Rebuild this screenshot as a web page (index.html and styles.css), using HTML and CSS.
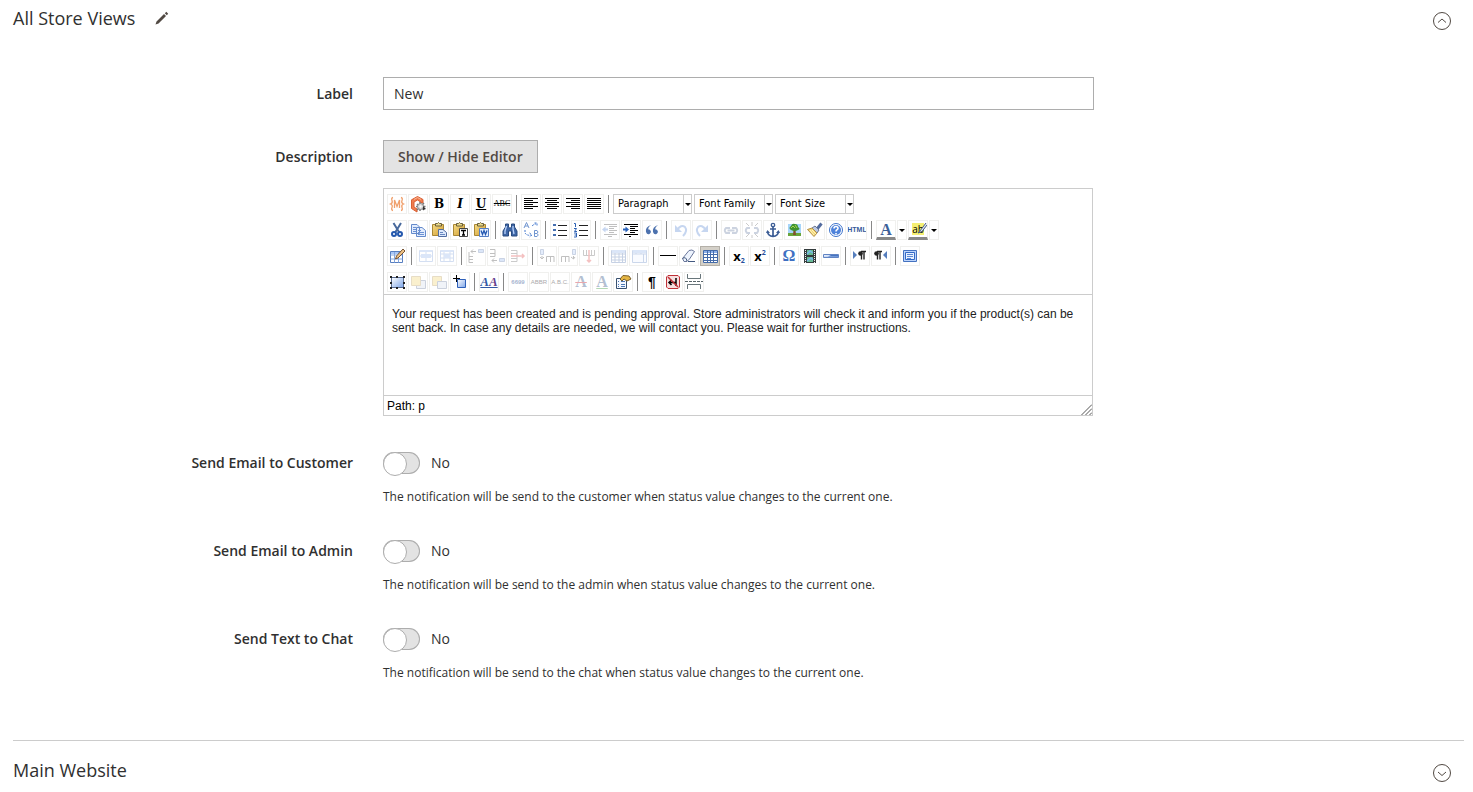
FILE: index.html
```
<!DOCTYPE html>
<html lang="en">
<head>
    <meta charset="UTF-8">
    <meta name="viewport" content="width=device-width, initial-scale=1.0">
    <title>All Store Views</title>
    <link rel="stylesheet" href="styles.css">
</head>
<body>

<!-- Toolbar icons -->
<svg class="sprite" aria-hidden="true">
    <defs>
        <linearGradient id="blue" x1="0" y1="0" x2="1" y2="1">
            <stop offset="0" stop-color="#fff"/>
            <stop offset="1" stop-color="#7ea6e8"/>
        </linearGradient>
        <linearGradient id="gold" x1="0" y1="0" x2="1" y2="1">
            <stop offset="0" stop-color="#f6dc85"/>
            <stop offset="1" stop-color="#cf9c33"/>
        </linearGradient>
    </defs>
    <symbol id="variable" viewBox="0 0 18 18">
        <path d="M5 2.500Q3 3 4 5.500Q5 8 2.500 9Q5 10 4 12.500Q3 15 5 15.500M13 2.500Q15 3 14 5.500Q13 8 15.500 9Q13 10 14 12.500Q15 15 13 15.500M6.500 13V5L9 11.500L11.500 5V13" fill="none" stroke="#f0a06c" stroke-width="1.300"/>
    </symbol>
    <symbol id="widget" viewBox="0 0 18 18">
        <path d="M8.500 1.500L14 4.500V8L11 7V6.500L8.500 5L5 7V12L8 14V17L2.500 13.500V4.800Z" fill="#ef7d4f" stroke="#d95f32"/>
        <path d="M5 4.500L8.500 2.500L12 4.500" fill="none" stroke="#f9b799"/>
        <path d="M11 7V9M11 14V16M7 11.500H9M14 11.500H16.500M8 9L15 15M15 8L8 15" stroke="#777" stroke-width="1.500"/>
        <circle cx="11.500" cy="11.500" r="3" fill="#ddd" stroke="#888"/>
        <circle cx="11.500" cy="11.500" r="1" fill="#fff"/>
        <path d="M14 11L17 14L14 15Z" fill="#333"/>
    </symbol>
    <symbol id="left" viewBox="0 0 18 18"><path d="M2 3.500H16M2 5.500H11M2 7.500H16M2 9.500H11M2 11.500H16M2 13.500H11" stroke="#000"/></symbol>
    <symbol id="center" viewBox="0 0 18 18"><path d="M2 3.500H16M4 5.500H14M2 7.500H16M4 9.500H14M2 11.500H16M4 13.500H14" stroke="#000"/></symbol>
    <symbol id="right" viewBox="0 0 18 18"><path d="M2 3.500H16M7 5.500H16M2 7.500H16M7 9.500H16M2 11.500H16M7 13.500H16" stroke="#000"/></symbol>
    <symbol id="full" viewBox="0 0 18 18"><path d="M2 3.500H16M2 5.500H16M2 7.500H16M2 9.500H16M2 11.500H16M2 13.500H16" stroke="#000"/></symbol>

    <symbol id="cut" viewBox="0 0 18 18">
        <path d="M5.500 2L11 11M13 2L7.500 11" stroke="#48699c" stroke-width="2"/>
        <circle cx="6" cy="13" r="2" fill="none" stroke="#2458ad" stroke-width="2"/>
        <circle cx="12" cy="13" r="2" fill="none" stroke="#2458ad" stroke-width="2"/>
    </symbol>
    <symbol id="copy" viewBox="0 0 18 18">
        <path d="M2.500 3.500H8L10.500 6V12.500H2.500ZM7.500 6.500H13L16.500 9.500V15.500H7.500Z" fill="#e3edfd" stroke="#648acb"/>
        <path d="M4 6.500H7M4 8.500H7M4 10.500H7M9 9.500H12M9 11.500H15M9 13.500H15" stroke="#6b91d3"/>
    </symbol>
    <symbol id="board" viewBox="0 0 18 18">
        <path d="M2.500 3.500H13.500V14.500H2.500Z" fill="url(#gold)" stroke="#a88735"/>
        <path d="M5.500 5V2.500H7.500L8.500 1.500L9.500 2.500H11.500V5Z" fill="#e9d98d" stroke="#695e39"/>
    </symbol>
    <symbol id="paste" viewBox="0 0 18 18">
        <use href="#board"/>
        <path d="M8.500 8.500H13L16.500 11.500V15.500H8.500Z" fill="#dce8fb" stroke="#526da0"/>
        <path d="M10 11.500H13M10 13.500H15" stroke="#6787bf"/>
    </symbol>
    <symbol id="pastetext" viewBox="0 0 18 18">
        <use href="#board"/>
        <path d="M8.500 7.500H16.500V15.500H8.500Z" fill="#fff" stroke="#444"/>
        <path d="M10 9.500H15M12.500 9V14M11 14H14" stroke="#000" stroke-width="1.300"/>
    </symbol>
    <symbol id="pasteword" viewBox="0 0 18 18">
        <use href="#board"/>
        <path d="M7.500 7.500H16.500V15.500H7.500Z" fill="#e5effe" stroke="#557ec3"/>
        <path d="M9 9.500L10.500 13.500L12 9.500L13.500 13.500L15 9.500" fill="none" stroke="#2257b0" stroke-width="1.300"/>
    </symbol>
    <symbol id="search" viewBox="0 0 18 18">
        <path d="M4.500 3H7.500V6L8.500 7H9.500L10.500 6V3H13.500V6L16 10V15H10.500V10H7.500V15H2V10L4.500 6Z" fill="#3e66a6" stroke="#294a7e"/>
        <path d="M5.500 5L4 10V13M12 5V8L13 13" fill="none" stroke="#b9d2fa" stroke-width="1.300"/>
    </symbol>
    <symbol id="replace" viewBox="0 0 18 18">
        <path d="M2 7L4.500 1.500L7 7M3 5H6M12.500 9.500V15.500H15Q17.500 14 15 12.500Q17 11 15 9.500ZM12.500 12.500H15" fill="none" stroke="#7195cf"/>
        <path d="M10 5Q12 3 14 3M12.500 2H15V4.500M3 9V12Q5 15 9 14M7.500 12L10 14L7.500 16" fill="none" stroke="#477bcf" stroke-dasharray="2 1"/>
    </symbol>
    <symbol id="bullist" viewBox="0 0 18 18">
        <path d="M7 4.500H16M7 9.500H16M7 14.500H16" stroke="#222"/>
        <path d="M2 3H5V5H2ZM2 8H5V10H2ZM2 13H5V15H2Z" fill="#456fb0"/>
    </symbol>
    <symbol id="numlist" viewBox="0 0 18 18">
        <path d="M7 4.500H16M7 9.500H16M7 14.500H16" stroke="#222"/>
        <path d="M2 2.500H3.500V6M2 7.500H4.500L2.500 10.500H5M2 12H4.500V16H2M2.500 14H4" fill="none" stroke="#2e62b4"/>
    </symbol>
    <symbol id="outdent" viewBox="0 0 18 18">
        <path d="M3 3.500H16M8 5.500H16M8 7.500H13M8 9.500H16M8 11.500H13M3 13.500H16M7 15.500H11" stroke="#333"/>
        <path d="M1 8.500L4.500 5.500V7.500H7V9.500H4.500V11.500Z" fill="#477bcf"/>
    </symbol>
    <symbol id="indent" viewBox="0 0 18 18">
        <path d="M2 3.500H16M8 5.500H16M8 7.500H13M8 9.500H16M8 11.500H13M2 13.500H16M7 15.500H9" stroke="#000"/>
        <path d="M7 8.500L3.500 5.500V7.500H1V9.500H3.500V11.500Z" fill="#2a62ba"/>
    </symbol>
    <symbol id="quote" viewBox="0 0 18 18">
        <path d="M8 4Q2 6 3 11Q4 14 6.500 13Q9 11 7 9Q6 8 5 8.500Q5 6 8 4ZM15 4Q9 6 10 11Q11 14 13.500 13Q16 11 14 9Q13 8 12 8.500Q12 6 15 4Z" fill="#4d72ae"/>
    </symbol>
    <symbol id="undo" viewBox="0 0 18 18">
        <path d="M5 9Q9 3 13 6Q16 10 11 15" fill="none" stroke="#477bcf" stroke-width="2"/>
        <path d="M3 4V11H10Z" fill="#477bcf"/>
    </symbol>
    <symbol id="redo" viewBox="0 0 18 18">
        <path d="M13 9Q9 3 5 6Q2 10 7 15" fill="none" stroke="#477bcf" stroke-width="2"/>
        <path d="M15 4V11H8Z" fill="#477bcf"/>
    </symbol>
    <symbol id="link" viewBox="0 0 18 18">
        <path d="M8 7H4Q1.500 9.500 4 12H8M10 7H14Q16.500 9.500 14 12H10M5.500 9.500H12.500" fill="none" stroke="#59719a" stroke-width="1.800"/>
    </symbol>
    <symbol id="unlink" viewBox="0 0 18 18">
        <path d="M7 7H4Q1.500 9.500 4 12H7M11 7H14Q16.500 9.500 14 12H11" fill="none" stroke="#59719a" stroke-width="1.800"/>
        <path d="M9 1V5M9 14V17M3 2L6 5M15 2L12 5M3 16L6 13M15 16L12 13" stroke="#555"/>
    </symbol>
    <symbol id="anchor" viewBox="0 0 18 18">
        <circle cx="9" cy="4" r="1.700" fill="none" stroke="#3c5d95" stroke-width="1.300"/>
        <path d="M9 6V15M6 8H12M3.500 10.500Q4 15 9 15.500Q14 15 14.500 10.500" fill="none" stroke="#3c5d95" stroke-width="1.700"/>
        <path d="M2 12L3.500 9L6 12ZM16 12L14.500 9L12 12Z" fill="#3c5d95"/>
    </symbol>
    <symbol id="image" viewBox="0 0 18 18">
        <path d="M3 3H16V15H3Z" fill="#a7d5fa"/>
        <path d="M3 12H16V15H3Z" fill="#69a53b"/>
        <path d="M8.500 9H10.500L11 14H8Z" fill="#80522c"/>
        <path d="M6 9Q3 7 6 5Q7 2 10 3Q13 3 13 6Q16 8 13 9Q10 11 6 9Z" fill="#3f922f"/>
        <path d="M6 7L8 5L10 7M10 4L12 7" stroke="#a8d64e" fill="none"/>
    </symbol>
    <symbol id="cleanup" viewBox="0 0 18 18">
        <path d="M15.500 2.500L11 8" stroke="#526b9e" stroke-width="3"/>
        <path d="M9 5L13 9L11 12L6 7Z" fill="#bcc9e2" stroke="#6d7894"/>
        <path d="M6 7L1.500 8.500L8 15.500L11 12Z" fill="#f4d878" stroke="#b39145"/>
        <path d="M4 9L8 14M6 9L10 13" stroke="#fff4bd"/>
    </symbol>
    <symbol id="help" viewBox="0 0 18 18">
        <circle cx="9" cy="9" r="6.500" fill="#fff" stroke="#3d73cb"/>
        <circle cx="9" cy="9" r="5" fill="#4d82da"/>
        <path d="M7 7.500Q7 5.500 9 5.500Q11 5.500 11 7.200Q11 8 10 8.700Q9 9.200 9 10.500M9 12V13.500" fill="none" stroke="#fff" stroke-width="1.600"/>
    </symbol>

    <symbol id="tableedit" viewBox="0 0 18 18">
        <path d="M2.500 4.500H14.500V15.500H2.500Z" fill="#fff" stroke="#577ebf"/>
        <path d="M3 5H14V7H3Z" fill="#a9c7f7"/>
        <path d="M2.500 8H14.500M2.500 12H14.500M6.500 5V15.500M10.500 5V15.500" stroke="#86a8df"/>
        <path d="M15 2L17 4L10 11L7.500 12L8.500 9Z" fill="#eec285" stroke="#765334"/>
    </symbol>
    <symbol id="rowprops" viewBox="0 0 18 18">
        <path d="M2.500 3.500H15.500V14.500H2.500ZM2.500 9H15.500M9 4V14" fill="none" stroke="#7499d5"/>
        <path d="M3 3H15V5H3ZM4 7H14V11H4Z" fill="#8baee9"/>
    </symbol>
    <symbol id="cellprops" viewBox="0 0 18 18">
        <path d="M2.500 3.500H15.500V14.500H2.500ZM2.500 7H15.500M2.500 11H15.500M6 4V14M12 4V14" fill="none" stroke="#7499d5"/>
        <path d="M3 3H15V5H3ZM6 7H12V11H6Z" fill="#8baee9"/>
    </symbol>
    <symbol id="rowbefore" viewBox="0 0 18 18">
        <path d="M2 5V15.500H6M2 9.500H6M2 12.500H6" fill="none" stroke="#333"/>
        <path d="M11.500 2.500H16.500V5.500H11.500Z" fill="#8baee9" stroke="#5370a8"/>
        <path d="M4 4.500H9M6 2.500L4 4.500L6 6.500" fill="none" stroke="#333"/>
    </symbol>
    <symbol id="rowafter" viewBox="0 0 18 18">
        <path d="M2 2.500H7M2 6.500H7M2 9.500H7V2.500M4 13.500H9" fill="none" stroke="#333"/>
        <path d="M11.500 11.500H16.500V14.500H11.500Z" fill="#8baee9" stroke="#5370a8"/>
        <path d="M6 11.500L4 13.500L6 15.500" fill="none" stroke="#333"/>
    </symbol>
    <symbol id="rowdelete" viewBox="0 0 18 18">
        <path d="M2 3.500H8V14.500H2M2 6.500H8M2 11.500H8" fill="none" stroke="#555"/>
        <path d="M2 9H15M13 7L15 9L13 11" fill="none" stroke="#d33" stroke-width="1.500"/>
    </symbol>
    <symbol id="colbefore" viewBox="0 0 18 18">
        <path d="M2.500 2.500H5.500V7.500H2.500Z" fill="#a9c7f7" stroke="#5370a8"/>
        <path d="M4 9V12M2 10L4 12L6 10M8.500 15V9.500H16V15M12.500 10V15" fill="none" stroke="#333"/>
    </symbol>
    <symbol id="colafter" viewBox="0 0 18 18">
        <path d="M13.500 2.500H16.500V7.500H13.500Z" fill="#a9c7f7" stroke="#5370a8"/>
        <path d="M14.500 9V12M12 10L14.500 12L16 10M2.500 15V9.500H10V15M6.500 10V15" fill="none" stroke="#333"/>
    </symbol>
    <symbol id="coldelete" viewBox="0 0 18 18">
        <path d="M3.500 3V8.500H14.500V3M6.500 3V8M11.500 3V8" fill="none" stroke="#555"/>
        <path d="M9 3V15M7 13L9 15L11 13" fill="none" stroke="#d33" stroke-width="1.500"/>
    </symbol>
    <symbol id="split" viewBox="0 0 18 18">
        <path d="M2.500 3.500H16.500V15.500H2.500ZM2.500 7H16.500M2.500 10H16.500M2.500 13H16.500M6 4V15M10 4V15M13.500 4V15" fill="none" stroke="#456ba9"/>
        <path d="M3 3H16V6H3Z" fill="#8baee9"/>
    </symbol>
    <symbol id="merge" viewBox="0 0 18 18">
        <path d="M2.500 3.500H16.500V15.500H2.500ZM2.500 7H16.500M6 4V7M11 4V7M13.500 7V15" fill="#edf4ff" stroke="#577ebf"/>
        <path d="M3 3H16V6H3Z" fill="#8baee9"/>
    </symbol>
    <symbol id="hr" viewBox="0 0 18 18"><path d="M1 8.500H17" stroke="#000"/></symbol>
    <symbol id="eraser" viewBox="0 0 18 18">
        <path d="M2.500 11.500L9 3.500Q12 2 14.500 4.500L9.500 12L7 14.500H4Z" fill="#edf3fd" stroke="#69769a"/>
        <path d="M2.500 11.500Q6 9 7 14M8 14.500H15" fill="none" stroke="#435980"/>
    </symbol>
    <symbol id="grid" viewBox="0 0 18 18">
        <path d="M2.500 3.500H16.500V15.500H2.500Z" fill="#fff" stroke="#456ba9"/>
        <path d="M3 4H16V6H3Z" fill="#8baee9"/>
        <path d="M3 7.500H16M3 10.500H16M3 13.500H16M6.500 4V15M9.500 4V15M12.500 4V15" stroke="#456ba9"/>
    </symbol>
    <symbol id="media" viewBox="0 0 18 18">
        <path d="M3 2H15V16H3Z" fill="#343c3d"/>
        <path d="M6 3H12V8H6ZM6 10H12V15H6Z" fill="#67bb93"/>
        <path d="M4.500 3V16M13.500 3V16" stroke="#eee" stroke-dasharray="1 1"/>
        <path d="M6 7L9 4L12 6M6 14L10 11L12 13" fill="none" stroke="#79b7ec" stroke-width="1.500"/>
    </symbol>
    <symbol id="advhr" viewBox="0 0 18 18"><path d="M1.500 7.500H16.500V10.500H1.500Z" fill="url(#blue)" stroke="#6184c3"/><path d="M9 8H16V9.500H6Z" fill="#4775c1"/></symbol>
    <symbol id="ltr" viewBox="0 0 18 18">
        <path d="M2 4L6 8L2 12Z" fill="#567ebd"/>
        <path d="M10 4.500H15M10.500 5V12.500M13 5V12.500" fill="none" stroke="#222" stroke-width="1.400"/>
        <circle cx="9.500" cy="6.500" r="2.300" fill="#222"/>
    </symbol>
    <symbol id="rtl" viewBox="0 0 18 18">
        <path d="M15 4L11 8L15 12Z" fill="#567ebd"/>
        <path d="M5 4.500H10M5.500 5V12.500M8 5V12.500" fill="none" stroke="#222" stroke-width="1.400"/>
        <circle cx="4.500" cy="6.500" r="2.300" fill="#222"/>
    </symbol>
    <symbol id="fullscreen" viewBox="0 0 18 18">
        <path d="M2.500 3.500H15.500V14.500H2.500Z" fill="#bcd4fb" stroke="#4472c0"/>
        <path d="M4.500 5.500H13.500V12.500H4.500Z" fill="#e8f1ff" stroke="#3269c6"/>
        <path d="M6 7.500H12M6 9.500H12M6 11.500H10" stroke="#5b89d5"/>
    </symbol>

    <symbol id="layer" viewBox="0 0 18 18">
        <path d="M3.500 4.500H15.500V14.500H3.500Z" fill="url(#blue)" stroke="#566a91"/>
        <path d="M2 3H4V5H2ZM8 3H10V5H8ZM15 3H17V5H15ZM2 9H4V11H2ZM15 9H17V11H15ZM2 14H4V16H2ZM8 14H10V16H8ZM15 14H17V16H15Z" fill="#222"/>
    </symbol>
    <symbol id="forward" viewBox="0 0 18 18">
        <path d="M7.500 7.500H16.500V15.500H7.500Z" fill="#cfd9eb" stroke="#566a91"/>
        <path d="M2.500 3.500H11.500V12.500H2.500Z" fill="#f0d060" stroke="#b39145"/>
    </symbol>
    <symbol id="backward" viewBox="0 0 18 18">
        <path d="M2.500 3.500H11.500V12.500H2.500Z" fill="#f0d060" stroke="#b39145"/>
        <path d="M7.500 8.500H16.500V15.500H7.500Z" fill="#cfd9eb" stroke="#566a91"/>
    </symbol>
    <symbol id="insertlayer" viewBox="0 0 18 18">
        <path d="M6.500 6.500H14.500V14.500H6.500Z" fill="url(#blue)" stroke="#2e60b9"/>
        <path d="M5.500 2V9M2 5.500H9" stroke="#000"/>
    </symbol>
    <symbol id="attribs" viewBox="0 0 18 18">
        <path d="M2.500 5.500H12.500V15.500H2.500Z" fill="#f4f8ff" stroke="#38506f"/>
        <path d="M4 8.500H5M7 8.500H11M4 11.500H5M7 11.500H11M4 13.500H5M7 13.500H11" stroke="#4d79b6"/>
        <path d="M6 6L9 2.500L15 3L17 6L13 8L10 6L8 8Z" fill="#e4b542" stroke="#795e2c"/>
    </symbol>
    <symbol id="nonbreaking" viewBox="0 0 18 18">
        <path d="M4 2.500H14L15.500 4V14L14 15.500H4L2.500 14V4Z" fill="#f7dfdf" stroke="#bf3037"/>
        <path d="M5 9.500H12V5M7.500 7L5 9.500L7.500 12M12 9V13" fill="none" stroke="#000" stroke-width="1.500"/>
        <path d="M4 4L14 14" stroke="#bf3037" stroke-width="1.500"/>
    </symbol>
    <symbol id="pagebreak" viewBox="0 0 18 18">
        <path d="M2.500 1V5.500H15.500V1M2.500 16V11.500H15.500V16" fill="none" stroke="#69767b"/>
        <path d="M0 8.500H18" stroke="#59656a" stroke-dasharray="3 1"/>
    </symbol>
</svg>

<main class="page">
    <section class="section">
        <header class="section-header">
            <h2>All Store Views</h2>
            <button class="icon-button edit" type="button" aria-label="Edit">
                <svg width="14" height="14" viewBox="0 0 14 14"><path d="M0.500 13.500L1.500 10.500L9 3L11 5L3.500 12.500ZM9.800 2.200L11.300 0.800L13.200 2.700L11.800 4.200Z" fill="#514943"/></svg>
            </button>
            <button class="icon-button toggle" type="button" aria-label="Collapse">
                <svg width="20" height="20" viewBox="0 0 20 20" fill="none" stroke="#514943"><circle cx="10" cy="10" r="8.500"/><path d="M6 11.500L10 8L14 11.500"/></svg>
            </button>
        </header>

        <form class="fields">
            <div class="field">
                <label for="label">Label</label>
                <div class="control"><input class="text" type="text" id="label" value="New"></div>
            </div>

            <div class="field">
                <label for="show-editor">Description</label>
                <div class="control">
                    <button class="action" type="button" id="show-editor">Show / Hide Editor</button>
                    <div class="editor">
                        <div class="toolbar">
                            <div class="row">
                                <button type="button" aria-label="Insert variable"><svg><use href="#variable"/></svg></button>
                                <button type="button" aria-label="Insert widget"><svg><use href="#widget"/></svg></button>
                                <button type="button" class="serif">B</button>
                                <button type="button" class="serif italic">I</button>
                                <button type="button" class="serif underline">U</button>
                                <button type="button" class="abc">ABC</button>
                                <i class="sep"></i>
                                <button type="button" aria-label="Align left"><svg><use href="#left"/></svg></button>
                                <button type="button" aria-label="Align center"><svg><use href="#center"/></svg></button>
                                <button type="button" aria-label="Align right"><svg><use href="#right"/></svg></button>
                                <button type="button" aria-label="Align full"><svg><use href="#full"/></svg></button>
                                <i class="sep"></i>
                                <span class="list"><select aria-label="Format"><option>Paragraph</option></select></span>
                                <span class="list"><select aria-label="Font family"><option>Font Family</option></select></span>
                                <span class="list"><select aria-label="Font size"><option>Font Size</option></select></span>
                            </div>
                            <div class="row">
                                <button type="button" aria-label="Cut"><svg><use href="#cut"/></svg></button>
                                <button type="button" aria-label="Copy"><svg><use href="#copy"/></svg></button>
                                <button type="button" aria-label="Paste"><svg><use href="#paste"/></svg></button>
                                <button type="button" aria-label="Paste as text"><svg><use href="#pastetext"/></svg></button>
                                <button type="button" aria-label="Paste from Word"><svg><use href="#pasteword"/></svg></button>
                                <i class="sep"></i>
                                <button type="button" aria-label="Find"><svg><use href="#search"/></svg></button>
                                <button type="button" aria-label="Replace"><svg><use href="#replace"/></svg></button>
                                <i class="sep"></i>
                                <button type="button" aria-label="Bullet list"><svg><use href="#bullist"/></svg></button>
                                <button type="button" aria-label="Numbered list"><svg><use href="#numlist"/></svg></button>
                                <i class="sep"></i>
                                <button type="button" aria-label="Outdent" disabled><svg><use href="#outdent"/></svg></button>
                                <button type="button" aria-label="Indent"><svg><use href="#indent"/></svg></button>
                                <button type="button" aria-label="Blockquote"><svg><use href="#quote"/></svg></button>
                                <i class="sep"></i>
                                <button type="button" aria-label="Undo" disabled><svg><use href="#undo"/></svg></button>
                                <button type="button" aria-label="Redo" disabled><svg><use href="#redo"/></svg></button>
                                <i class="sep"></i>
                                <button type="button" aria-label="Link" disabled><svg><use href="#link"/></svg></button>
                                <button type="button" aria-label="Unlink" disabled><svg><use href="#unlink"/></svg></button>
                                <button type="button" aria-label="Anchor"><svg><use href="#anchor"/></svg></button>
                                <button type="button" aria-label="Image"><svg><use href="#image"/></svg></button>
                                <button type="button" aria-label="Clean up"><svg><use href="#cleanup"/></svg></button>
                                <button type="button" aria-label="Help"><svg><use href="#help"/></svg></button>
                                <button type="button" class="html">HTML</button>
                                <i class="sep"></i>
                                <button type="button" class="color">A</button>
                                <button type="button" class="arrow" aria-label="Text colors"></button>
                                <button type="button" class="color back"><span>ab</span><svg viewBox="0 0 18 18"><path d="M16 3L9.500 11.500L8 13L12 11.500L17 5" fill="#dce5f5" stroke="#46597c"/></svg></button>
                                <button type="button" class="arrow" aria-label="Background colors"></button>
                            </div>
                            <div class="row">
                                <button type="button" aria-label="Table"><svg><use href="#tableedit"/></svg></button>
                                <i class="sep"></i>
                                <button type="button" aria-label="Row properties" disabled><svg><use href="#rowprops"/></svg></button>
                                <button type="button" aria-label="Cell properties" disabled><svg><use href="#cellprops"/></svg></button>
                                <i class="sep"></i>
                                <button type="button" aria-label="Row before" disabled><svg><use href="#rowbefore"/></svg></button>
                                <button type="button" aria-label="Row after" disabled><svg><use href="#rowafter"/></svg></button>
                                <button type="button" aria-label="Delete row" disabled><svg><use href="#rowdelete"/></svg></button>
                                <i class="sep"></i>
                                <button type="button" aria-label="Column before" disabled><svg><use href="#colbefore"/></svg></button>
                                <button type="button" aria-label="Column after" disabled><svg><use href="#colafter"/></svg></button>
                                <button type="button" aria-label="Delete column" disabled><svg><use href="#coldelete"/></svg></button>
                                <i class="sep"></i>
                                <button type="button" aria-label="Split cells" disabled><svg><use href="#split"/></svg></button>
                                <button type="button" aria-label="Merge cells" disabled><svg><use href="#merge"/></svg></button>
                                <i class="sep"></i>
                                <button type="button" aria-label="Horizontal line"><svg><use href="#hr"/></svg></button>
                                <button type="button" aria-label="Remove formatting"><svg><use href="#eraser"/></svg></button>
                                <button type="button" class="active" aria-label="Guidelines"><svg><use href="#grid"/></svg></button>
                                <i class="sep"></i>
                                <button type="button" class="script">x<sub>2</sub></button>
                                <button type="button" class="script">x<sup>2</sup></button>
                                <i class="sep"></i>
                                <button type="button" class="omega">Ω</button>
                                <button type="button" aria-label="Media"><svg><use href="#media"/></svg></button>
                                <button type="button" aria-label="Advanced line"><svg><use href="#advhr"/></svg></button>
                                <i class="sep"></i>
                                <button type="button" aria-label="Left to right"><svg><use href="#ltr"/></svg></button>
                                <button type="button" aria-label="Right to left"><svg><use href="#rtl"/></svg></button>
                                <i class="sep"></i>
                                <button type="button" aria-label="Fullscreen"><svg><use href="#fullscreen"/></svg></button>
                            </div>
                            <div class="row">
                                <button type="button" aria-label="Layer"><svg><use href="#layer"/></svg></button>
                                <button type="button" aria-label="Move forward" disabled><svg><use href="#forward"/></svg></button>
                                <button type="button" aria-label="Move backward" disabled><svg><use href="#backward"/></svg></button>
                                <button type="button" aria-label="Insert layer"><svg><use href="#insertlayer"/></svg></button>
                                <i class="sep"></i>
                                <button type="button" class="styleprops"><span>A</span><span>A</span></button>
                                <i class="sep"></i>
                                <button type="button" class="tiny cite" disabled>6699</button>
                                <button type="button" class="tiny" disabled>ABBR</button>
                                <button type="button" class="tiny" disabled>A.B.C.</button>
                                <button type="button" class="letter del" disabled>A</button>
                                <button type="button" class="letter ins" disabled>A</button>
                                <button type="button" aria-label="Attributes"><svg><use href="#attribs"/></svg></button>
                                <i class="sep"></i>
                                <button type="button" class="pilcrow">¶</button>
                                <button type="button" aria-label="Nonbreaking space"><svg><use href="#nonbreaking"/></svg></button>
                                <button type="button" aria-label="Page break"><svg><use href="#pagebreak"/></svg></button>
                            </div>
                        </div>
                        <div class="content" contenteditable="true" spellcheck="false"><p>Your request has been created and is pending approval. Store administrators will check it and inform you if the product(s) can be sent back. In case any details are needed, we will contact you. Please wait for further instructions.</p></div>
                        <div class="statusbar">
                            <span>Path: <a href="#">p</a></span>
                            <svg width="11" height="11" viewBox="0 0 11 11"><path d="M0.500 11L11 0.500M4.500 11L11 4.500M8.500 11L11 8.500" stroke="#555"/></svg>
                        </div>
                    </div>
                </div>
            </div>

            <div class="field">
                <label for="customer">Send Email to Customer</label>
                <div class="control">
                    <div class="switch"><input type="checkbox" id="customer"><label for="customer">No</label></div>
                    <p class="note">The notification will be send to the customer when status value changes to the current one.</p>
                </div>
            </div>
            <div class="field">
                <label for="admin">Send Email to Admin</label>
                <div class="control">
                    <div class="switch"><input type="checkbox" id="admin"><label for="admin">No</label></div>
                    <p class="note">The notification will be send to the admin when status value changes to the current one.</p>
                </div>
            </div>
            <div class="field">
                <label for="chat">Send Text to Chat</label>
                <div class="control">
                    <div class="switch"><input type="checkbox" id="chat"><label for="chat">No</label></div>
                    <p class="note">The notification will be send to the chat when status value changes to the current one.</p>
                </div>
            </div>
        </form>
    </section>

    <section class="section">
        <header class="section-header">
            <h2>Main Website</h2>
            <button class="icon-button toggle" type="button" aria-label="Expand">
                <svg width="20" height="20" viewBox="0 0 20 20" fill="none" stroke="#514943"><circle cx="10" cy="10" r="8.500"/><path d="M6 9L10 12.500L14 9"/></svg>
            </button>
        </header>
    </section>
</main>

</body>
</html>
```
FILE: styles.css
```
* {
    box-sizing: border-box;
}
body {
    margin: 0;
    background-color: #fff;
    color: #303030;
    font-family: "Open Sans", "Noto Sans", sans-serif;
    font-size: 14px;
    line-height: 20px;
}
button {
    padding: 0;
    border: none;
    background: none;
    color: inherit;
    font-family: inherit;
    cursor: pointer;
}
.sprite {
    display: block;
    width: 0;
    height: 0;
}
.page {
    padding: 0 9px 0 13px;
}
.section + .section {
    border-top: 1px solid #ccc;
    padding-top: 11px;
}
.section-header {
    display: flex;
    align-items: center;
    height: 35px;
}
h2 {
    margin: 0;
    font-size: 18px;
    font-weight: 500;
    line-height: 24px;
}
.icon-button {
    display: flex;
}
.edit {
    margin-left: 20px;
}
.toggle {
    margin: 6px 12px 0 auto;
}

/* Form */
.fields {
    display: flex;
    flex-direction: column;
    gap: 30px;
    padding: 42px 0 60px;
}
.field {
    display: grid;
    grid-template-columns: minmax(0, 340fr) minmax(0, 711fr) minmax(0, 340fr);
    column-gap: 30px;
}
.field > label {
    padding-top: 7px;
    text-align: right;
    font-weight: 600;
}
.text {
    display: block;
    width: 100%;
    height: 33px;
    padding: 0 10px;
    border: 1px solid #adadad;
    color: #303030;
    font-family: inherit;
    font-size: 14px;
}
.action {
    display: block;
    height: 33px;
    padding: 0 14px;
    border: 1px solid #adadad;
    background-color: #e3e3e3;
    color: #514943;
    font-size: 14px;
    font-weight: 600;
}
.switch {
    display: flex;
    align-items: center;
    gap: 11px;
    height: 34px;
}
.switch input {
    appearance: none;
    width: 37px;
    height: 22px;
    margin: 0;
    border-radius: 11px;
    background-color: #e3e3e3;
    box-shadow: inset 0 0 0 1px #adadad;
}
.switch input::before {
    content: "";
    display: block;
    width: 22px;
    height: 22px;
    border: 1px solid #adadad;
    border-radius: 50%;
    background-color: #fff;
}
.note {
    margin: 9px 0 0;
    font-size: 12px;
    line-height: 15px;
}

/* Editor */
.editor {
    margin: 15px 1px 0 0;
    border: 1px solid #ccc;
}
.toolbar {
    display: flex;
    flex-direction: column;
    gap: 6px;
    padding: 5px 3px 2px;
}
.row {
    display: flex;
    gap: 1px;
}
.row button {
    display: flex;
    flex: none;
    align-items: center;
    justify-content: center;
    width: 20px;
    height: 20px;
    border: 1px solid #f0f0ee;
    overflow: hidden;
    color: #000;
}
.row svg {
    flex: none;
    width: 18px;
    height: 18px;
}
.row button:disabled > * {
    opacity: 0.3;
}
.row .active {
    border-color: #b4b0a8;
    background-color: #d4d0c8;
}
.sep {
    width: 1px;
    height: 18px;
    margin: 1px 3px;
    background-color: #888;
}
.row .serif {
    font: bold 12px/18px "DejaVu Serif", serif;
}
.row .italic {
    font-style: italic;
}
.row .underline {
    text-decoration: underline;
}
.row .abc {
    font: 8px/18px "Liberation Serif", serif;
    text-decoration: line-through;
}
.row .html {
    color: #35599a;
    font: bold 7px/18px "Liberation Sans", sans-serif;
}
.row .color {
    border-bottom: 3px solid #888;
    color: #3d5f99;
    font: bold 16px/17px "Liberation Serif", serif;
}
.row .back {
    color: #000;
    font: 10px/12px "Open Sans", sans-serif;
}
.back span {
    background-color: #f5ef72;
}
.back svg {
    margin-left: -14px;
    margin-right: -4px;
}
.row .arrow {
    width: 10px;
}
.arrow::before {
    content: "";
    border: 3px solid transparent;
    border-top-color: #000;
    border-bottom: 0;
}
.row .script {
    font: bold 13px/18px "Open Sans", sans-serif;
}
.script sub, .script sup {
    color: #274f9c;
    font-size: 7px;
    line-height: 8px;
}
.script sub {
    align-self: flex-end;
}
.script sup {
    align-self: flex-start;
    padding-top: 2px;
}
.row .omega {
    color: #3e6fc2;
    font: bold 16px/18px "Liberation Serif", serif;
}
.row .styleprops {
    color: #3458a5;
    font: italic bold 13px/16px "Liberation Serif", serif;
    text-decoration: underline;
}
.styleprops span + span {
    color: #67428f;
}
.row .tiny {
    color: #aaa;
    font: 6px/18px "Liberation Sans", sans-serif;
}
.row .cite {
    color: #a7b5d0;
    font-weight: bold;
}
.row .letter {
    color: #b4bfd2;
    font: bold 16px/18px "Liberation Serif", serif;
}
.row .del {
    text-decoration: line-through #e9a8ad;
}
.row .ins {
    text-decoration: underline #b4d8b4;
}
.row .pilcrow {
    font: bold 14px/18px "Liberation Sans", sans-serif;
}
.list {
    display: flex;
    position: relative;
    width: 79px;
    margin-right: 1px;
}
.list select {
    appearance: none;
    width: 100%;
    height: 20px;
    padding: 0 0 0 4px;
    border: 1px solid #ccc;
    border-radius: 0;
    background-color: #fff;
    color: #000;
    font: 11px/18px "DejaVu Sans Condensed", "Open Sans", sans-serif;
}
.list::before {
    content: "";
    position: absolute;
    top: 1px;
    right: 8px;
    bottom: 1px;
    border-left: 1px solid #ccc;
    pointer-events: none;
}
.list::after {
    content: "";
    position: absolute;
    top: 9px;
    right: 1px;
    border: 3px solid transparent;
    border-top-color: #000;
    border-bottom: 0;
    pointer-events: none;
}
.content {
    min-height: 102px;
    padding: 12px 8px;
    border: solid #ccc;
    border-width: 1px 0;
    color: #222;
    font: 12px/14px "Liberation Sans", Arial, sans-serif;
}
.content p {
    margin: 0;
}
.statusbar {
    display: flex;
    align-items: flex-end;
    justify-content: space-between;
    height: 19px;
    padding-left: 3px;
    color: #000;
    font: 12px/17px "Liberation Sans", Arial, sans-serif;
}
.statusbar a {
    color: inherit;
    text-decoration: none;
}
```
